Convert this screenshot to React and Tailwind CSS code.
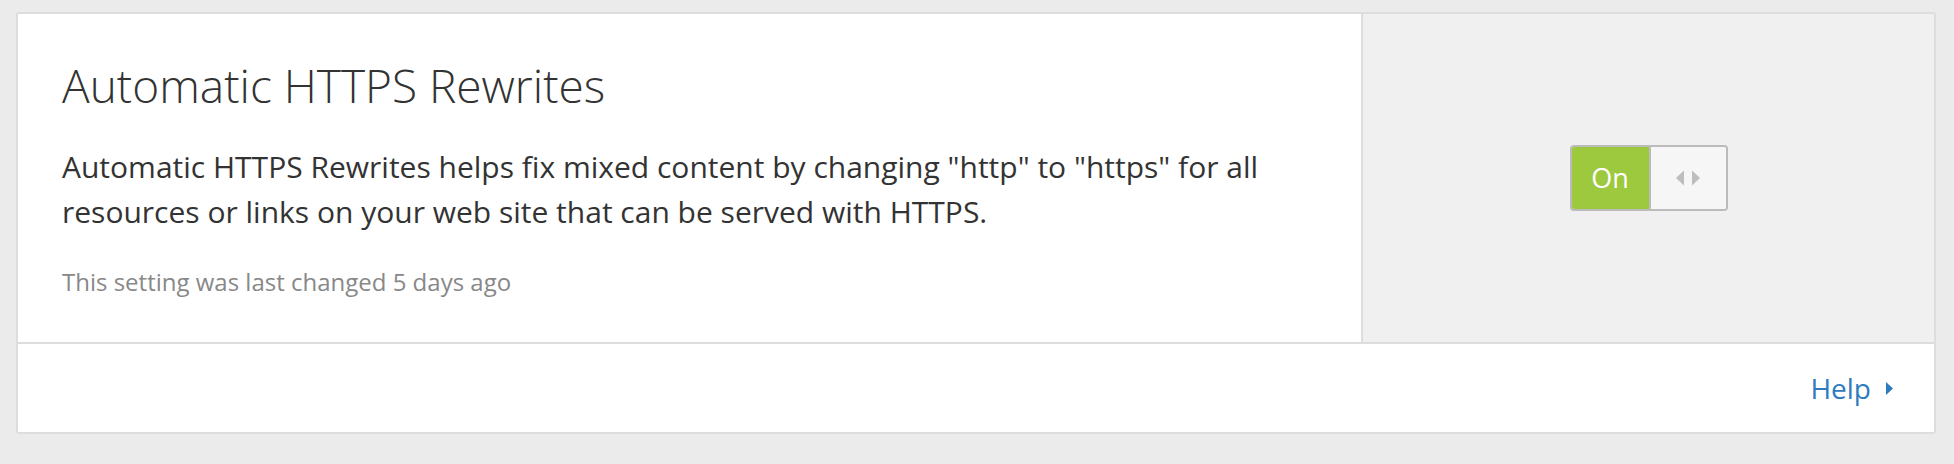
const Arrows = () => (
  <svg width="24" height="16" viewBox="0 0 24 16" className="text-[#bdbdbd]">
    <path d="M8 0.5 L0 8 L8 15.5 Z" fill="currentColor" />
    <path d="M16 0.5 L24 8 L16 15.5 Z" fill="currentColor" />
  </svg>
)

const Caret = () => (
  <svg width="7" height="13" viewBox="0 0 7 13" className="text-[#2f7bbf]">
    <path d="M0 0 L7 6.5 L0 13 Z" fill="currentColor" />
  </svg>
)

const App = () => {
  return (
    <div
      className="w-full h-[464px] bg-[#ebebeb] pt-3 pl-4 pr-[18px]"
      style={{ fontFamily: '"Open Sans", "Noto Sans", sans-serif' }}
    >
      <div className="bg-white border-2 border-[#dddddd] rounded-[3px]">
        <div className="flex h-[328px]">
          <div className="flex-1 pl-[44px] pr-[50px] pt-[43px]">
            <h1 className="text-[46px] leading-[56px] font-light text-[#333333]">
              Automatic HTTPS Rewrites
            </h1>
            <p className="mt-[31px] text-[30px] leading-[45px] text-[#333333]">
              Automatic HTTPS Rewrites helps fix mixed content by changing
              "http" to "https" for all resources or links on your web site
              that can be served with HTTPS.
            </p>
            <p className="mt-[32px] text-[24px] leading-[32px] text-[#888888]">
              This setting was last changed 5 days ago
            </p>
          </div>
          <div className="w-[573px] border-l-2 border-[#dddddd] bg-[#f0f0f0] flex items-center justify-center">
            <div className="flex h-[66px] w-[158px] border-2 border-[#bbbbbb] rounded-[4px] overflow-hidden">
              <div className="w-[77px] bg-[#9dc93f] flex items-center justify-center text-white text-[27px]">
                On
              </div>
              <div className="flex-1 border-l-2 border-[#bbbbbb] bg-[#f6f6f6] flex items-center justify-center">
                <Arrows />
              </div>
            </div>
          </div>
        </div>
        <div className="h-[90px] border-t-2 border-[#dddddd] flex items-center justify-end pr-[41px]">
          <a href="#" className="flex items-center gap-[15px] text-[28px] text-[#2f7bbf]">
            Help
            <Caret />
          </a>
        </div>
      </div>
    </div>
  )
}

export default App
